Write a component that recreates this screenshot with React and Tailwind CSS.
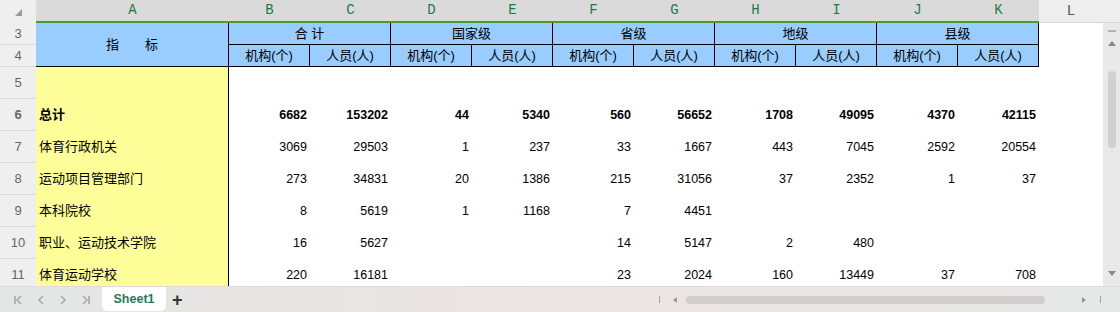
import React from 'react';

const cols = ['B', 'C', 'D', 'E', 'F', 'G', 'H', 'I', 'J', 'K'];
const groups = ['合 计', '国家级', '省级', '地级', '县级'];

const rows = [
  { n: 6, name: '总计', bold: true, v: ['6682', '153202', '44', '5340', '560', '56652', '1708', '49095', '4370', '42115'] },
  { n: 7, name: '体育行政机关', v: ['3069', '29503', '1', '237', '33', '1667', '443', '7045', '2592', '20554'] },
  { n: 8, name: '运动项目管理部门', v: ['273', '34831', '20', '1386', '215', '31056', '37', '2352', '1', '37'] },
  { n: 9, name: '本科院校', v: ['8', '5619', '1', '1168', '7', '4451', '', '', '', ''] },
  { n: 10, name: '职业、运动技术学院', v: ['16', '5627', '', '', '14', '5147', '2', '480', '', ''] },
  { n: 11, name: '体育运动学校', v: ['220', '16181', '', '', '23', '2024', '160', '13449', '37', '708'] },
];

const cjk = "font-['Liberation_Sans','Noto_Sans_CJK_SC',sans-serif]";

const RowNum = ({ n, h = 'h-[32px]' }) => (
  <div className={`w-[36px] ${h} shrink-0 bg-[#efefef] border-b border-[#d9d9d9] flex items-center justify-center text-[13px] text-[#666] font-['Liberation_Sans',sans-serif]`}>
    {n}
  </div>
);

const Chevron = ({ dir, bar }) => (
  <svg width="12" height="12" viewBox="0 0 12 12" fill="none" stroke="#a8a8a8" strokeWidth="1.6">
    {dir === 'left' ? <path d="M8 2 L4 6 L8 10" /> : <path d="M4 2 L8 6 L4 10" />}
    {bar === 'left' && <path d="M2 2 V10" />}
    {bar === 'right' && <path d="M10 2 V10" />}
  </svg>
);

export default function App() {
  return (
    <div className="w-[1120px] h-[312px] flex flex-col overflow-hidden bg-white">
      {/* column letters */}
      <div className="flex h-[23px] shrink-0">
        <div className="w-[36px] bg-[#efefef] relative">
          <svg className="absolute left-[15px] top-[9px]" width="7" height="7" viewBox="0 0 7 7">
            <polygon points="0,7 7,0 7,7" fill="#9a9a9a" />
          </svg>
        </div>
        <div className="flex bg-[#dadada] border-b-2 border-[#4f9a2c]">
          <div className="w-[193px] flex items-center justify-center text-[14px] text-[#1b7a4a] font-['Liberation_Mono',monospace]">A</div>
          {cols.map((c) => (
            <div key={c} className="w-[81px] flex items-center justify-center text-[14px] text-[#1b7a4a] font-['Liberation_Mono',monospace]">
              {c}
            </div>
          ))}
        </div>
        <div className="flex-1 bg-[#eeeeee] border-b border-[#d6d6d6] flex">
          <div className="w-[64px] flex items-center justify-center text-[14px] text-[#555] font-['Liberation_Mono',monospace]">L</div>
        </div>
      </div>

      <div className="flex h-[263px] shrink-0">
        <div className="w-[1103px] flex flex-col overflow-hidden">
          {/* table header rows 3-4 */}
          <div className={`flex h-[44px] shrink-0 text-[13px] text-black ${cjk}`}>
            <div className="flex flex-col">
              <RowNum n={3} h="h-[22px]" />
              <RowNum n={4} h="h-[22px]" />
            </div>
            <div className="w-[193px] bg-[#99ccff] border-r border-b border-black flex items-center justify-center">
              指　　标
            </div>
            {groups.map((g) => (
              <div key={g} className="w-[162px] flex flex-col bg-[#99ccff] border-r border-black">
                <div className="h-[22px] border-b border-black flex items-center justify-center">{g}</div>
                <div className="h-[22px] border-b border-black flex">
                  <div className="w-[81px] border-r border-black flex items-center justify-center">机构(个)</div>
                  <div className="flex-1 flex items-center justify-center">人员(人)</div>
                </div>
              </div>
            ))}
            <div className="flex-1 bg-white" />
          </div>

          {/* row 5 */}
          <div className="flex shrink-0">
            <RowNum n={5} />
            <div className="w-[193px] h-[32px] bg-[#ffff99] border-r border-black" />
          </div>

          {rows.map((r) => (
            <div key={r.n} className={`flex shrink-0 text-[12.5px] text-black ${cjk} ${r.bold ? 'font-bold' : ''}`}>
              <RowNum n={r.n} />
              <div className="w-[193px] h-[32px] bg-[#ffff99] border-r border-black flex items-center pl-[3px] text-[13px]">
                {r.name}
              </div>
              {r.v.map((v, i) => (
                <div key={i} className="w-[81px] h-[32px] flex items-center justify-end pr-[3px]">
                  {v}
                </div>
              ))}
            </div>
          ))}
        </div>

        {/* vertical scrollbar */}
        <div className="w-[17px] bg-[#e9e9e9] flex flex-col items-center">
          <div className="mt-[7px] w-[8px] h-[2px] bg-[#b4b4b4]" />
          <svg className="mt-[9px]" width="8" height="5" viewBox="0 0 8 5">
            <polygon points="0,5 4,0 8,5" fill="#888" />
          </svg>
          <div className="mt-[25px] w-[8px] h-[77px] rounded-[4px] bg-[#d0d0d0]" />
          <div className="flex-1" />
          <svg className="mb-[10px]" width="8" height="5" viewBox="0 0 8 5">
            <polygon points="0,0 8,0 4,5" fill="#888" />
          </svg>
        </div>
      </div>

      {/* sheet tab bar */}
      <div className="h-[26px] shrink-0 flex items-start border-t border-[#dcdcdc] bg-gradient-to-r from-[#e3e6e5] via-[#ece5e3] to-[#e6e8e8]">
        <div className="flex items-center h-[25px] gap-[10px] pl-[13px]">
          <Chevron dir="left" bar="left" />
          <Chevron dir="left" />
          <Chevron dir="right" />
          <Chevron dir="right" bar="right" />
        </div>
        <div className="ml-[11px] w-[64px] h-[24px] bg-white rounded-b-[5px] flex items-center justify-center text-[12.5px] font-bold text-[#1f7a5c] font-['Liberation_Sans',sans-serif]">
          Sheet1
        </div>
        <div className="ml-[6px] h-[25px] flex items-center text-[18px] font-bold text-[#333] font-['Liberation_Sans',sans-serif] leading-none">
          +
        </div>
        <div className="flex-1" />
        <div className="h-[25px] flex items-center">
          <div className="w-[1px] h-[7px] bg-[#a0a0a0]" />
          <svg className="ml-[13px]" width="4" height="6" viewBox="0 0 4 6">
            <polygon points="4,0 4,6 0,3" fill="#999" />
          </svg>
          <div className="ml-[9px] w-[359px] h-[8px] rounded-[4px] bg-[#d0cdcc]" />
          <svg className="ml-[37px]" width="4" height="6" viewBox="0 0 4 6">
            <polygon points="0,0 0,6 4,3" fill="#999" />
          </svg>
          <div className="ml-[14px] w-[1px] h-[7px] bg-[#a0a0a0]" />
          <div className="w-[19px]" />
        </div>
      </div>
    </div>
  );
}
